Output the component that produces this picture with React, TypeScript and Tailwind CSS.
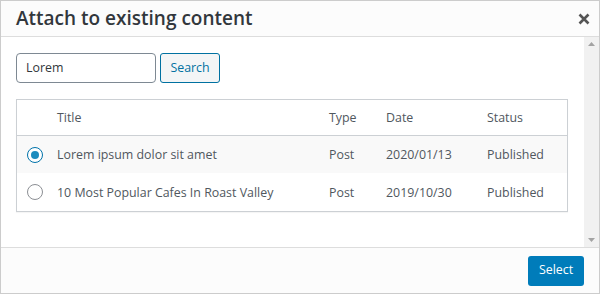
import React from "react";

const font = { fontFamily: '"Open Sans", "Noto Sans", sans-serif' };

export default function App() {
  return (
    <div className="w-[600px] h-[294px] overflow-hidden bg-white" style={font}>
      <div className="w-[600px] h-[294px] border border-[#cccccc] flex flex-col">
        {/* Header */}
        <div className="h-[36px] shrink-0 bg-[#fcfcfc] border-b border-[#dddddd] flex items-center justify-between pl-[15px] pr-[10px]">
          <div className="text-[19px] font-semibold text-[#32373c] leading-none -mt-[1px]">Attach to existing content</div>
          <svg width="12" height="12" viewBox="0 0 12 12" className="-mr-[1px]">
            <path d="M1.5 1.5 L10.5 10.5 M10.5 1.5 L1.5 10.5" stroke="#555" strokeWidth="2.6" strokeLinecap="butt" />
          </svg>
        </div>
        {/* Body */}
        <div className="flex-1 flex min-h-0">
          <div className="flex-1 pl-[15px] pr-[16px] pt-[16px]">
            <div className="flex gap-[4px]">
              <div className="w-[140px] h-[30px] border border-[#7e8993] rounded-[4px] flex items-center px-[9px] text-[12.4px] text-[#32373c]">Lorem</div>
              <div className="w-[60px] h-[30px] border border-[#0071a1] rounded-[3px] bg-[#f3f5f6] flex items-center justify-center text-[12.4px] text-[#0071a1]">Search</div>
            </div>
            <div className="mt-[16px] border border-[#ccd0d4] shadow-[0_1px_1px_rgba(0,0,0,0.04)] text-[12.4px] text-[#50575e]">
              <div className="h-[36px] flex items-center border-b border-[#ccd0d4] pt-[1px]">
                <div className="w-[40px]" />
                <div className="w-[272px]">Title</div>
                <div className="w-[57px]">Type</div>
                <div className="w-[101px]">Date</div>
                <div>Status</div>
              </div>
              <div className="h-[37px] flex items-center bg-[#f9f9f9] pt-[1px]">
                <div className="w-[40px] flex items-center pl-[10px]">
                  <span className="w-[16px] h-[16px] rounded-full border border-[#0073aa] bg-white flex items-center justify-center -mt-[1px]">
                    <span className="w-[8px] h-[8px] rounded-full bg-[#1e8cbe]" />
                  </span>
                </div>
                <div className="w-[272px]">Lorem ipsum dolor sit amet</div>
                <div className="w-[57px]">Post</div>
                <div className="w-[101px]">2020/01/13</div>
                <div>Published</div>
              </div>
              <div className="h-[38px] flex items-center bg-white pt-[2px]">
                <div className="w-[40px] flex items-center pl-[10px]">
                  <span className="w-[16px] h-[16px] rounded-full border border-[#8c8f94] bg-white -mt-[2px]" />
                </div>
                <div className="w-[272px]">10 Most Popular Cafes In Roast Valley</div>
                <div className="w-[57px]">Post</div>
                <div className="w-[101px]">2019/10/30</div>
                <div>Published</div>
              </div>
            </div>
          </div>
          {/* Scrollbar */}
          <div className="w-[15px] bg-[#f1f1f1] flex flex-col items-center justify-between py-[5px]">
            <svg width="7" height="4" viewBox="0 0 7 4"><path d="M0 4 L3.5 0 L7 4 Z" fill="#a3a3a3" /></svg>
            <svg width="7" height="4" viewBox="0 0 7 4"><path d="M0 0 L3.5 4 L7 0 Z" fill="#a3a3a3" /></svg>
          </div>
        </div>
        {/* Footer */}
        <div className="h-[46px] shrink-0 bg-[#fcfcfc] border-t border-[#dddddd] flex items-center justify-end pr-[15px]">
          <div className="h-[30px] w-[56px] rounded-[3px] bg-[#007cba] text-white text-[12.4px] flex items-center justify-center">Select</div>
        </div>
      </div>
    </div>
  );
}
